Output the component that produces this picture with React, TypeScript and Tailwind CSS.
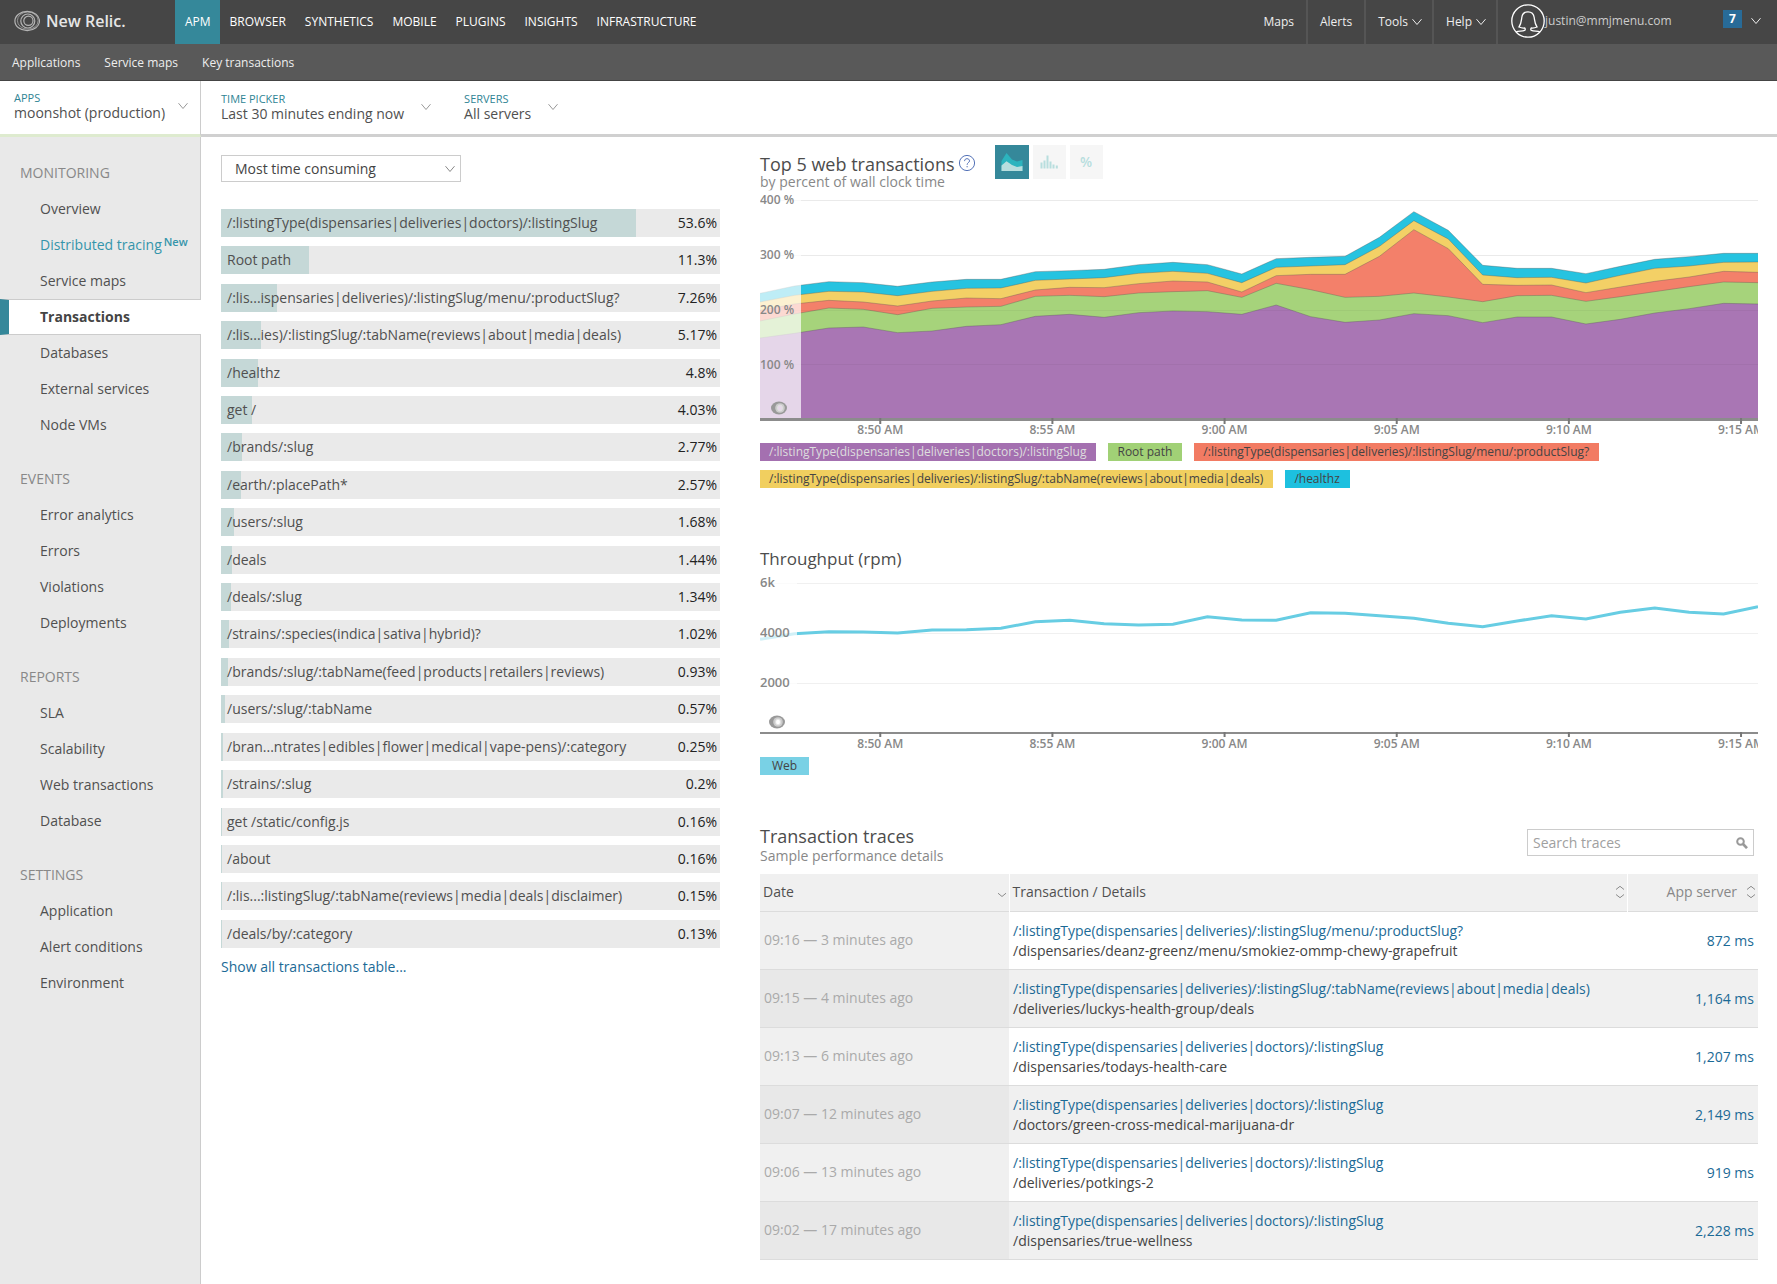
import { Fragment } from "react";
import type { ReactNode } from "react";

const products = ["APM", "BROWSER", "SYNTHETICS", "MOBILE", "PLUGINS", "INSIGHTS", "INFRASTRUCTURE"];

const sections = [
    {
        title: "MONITORING",
        items: ["Overview", "Distributed tracing", "Service maps", "Transactions", "Databases", "External services", "Node VMs"],
    },
    { title: "EVENTS", items: ["Error analytics", "Errors", "Violations", "Deployments"] },
    { title: "REPORTS", items: ["SLA", "Scalability", "Web transactions", "Database"] },
    { title: "SETTINGS", items: ["Application", "Alert conditions", "Environment"] },
];

const transactions: [string, number][] = [
    ["/:listingType(dispensaries|deliveries|doctors)/:listingSlug", 53.6],
    ["Root path", 11.3],
    ["/:lis...ispensaries|deliveries)/:listingSlug/menu/:productSlug?", 7.26],
    ["/:lis...ies)/:listingSlug/:tabName(reviews|about|media|deals)", 5.17],
    ["/healthz", 4.8],
    ["get /", 4.03],
    ["/brands/:slug", 2.77],
    ["/earth/:placePath*", 2.57],
    ["/users/:slug", 1.68],
    ["/deals", 1.44],
    ["/deals/:slug", 1.34],
    ["/strains/:species(indica|sativa|hybrid)?", 1.02],
    ["/brands/:slug/:tabName(feed|products|retailers|reviews)", 0.93],
    ["/users/:slug/:tabName", 0.57],
    ["/bran...ntrates|edibles|flower|medical|vape-pens)/:category", 0.25],
    ["/strains/:slug", 0.2],
    ["get /static/config.js", 0.16],
    ["/about", 0.16],
    ["/:lis...:listingSlug/:tabName(reviews|media|deals|disclaimer)", 0.15],
    ["/deals/by/:category", 0.13],
];

// Upper edge of every stacked band, one value per minute, in plot units (y grows downwards)
const bands = [
    { color: "#26c3e0", top: [490, 468, 455, 458, 469, 456, 448, 448, 425, 422, 418, 404, 397, 404, 432, 386, 382, 379, 322, 245, 301, 406, 415, 415, 431, 409, 388, 380, 370, 370] },
    { color: "#f3d066", top: [516, 496, 484, 486, 497, 484, 475, 474, 451, 447, 443, 430, 424, 430, 458, 412, 408, 404, 349, 272, 327, 435, 443, 442, 459, 436, 415, 408, 397, 396] },
    { color: "#f3806a", top: [541, 522, 511, 516, 528, 513, 504, 506, 480, 472, 473, 461, 453, 456, 486, 437, 433, 433, 379, 299, 356, 463, 466, 465, 488, 471, 454, 441, 424, 427] },
    { color: "#a6d37b", top: [573, 552, 534, 538, 554, 535, 531, 529, 499, 496, 500, 489, 485, 482, 502, 460, 479, 502, 499, 489, 501, 515, 497, 496, 514, 500, 485, 470, 456, 458] },
    { color: "#a976b4", top: [624, 610, 594, 591, 608, 603, 589, 584, 559, 553, 562, 548, 543, 545, 553, 525, 560, 577, 570, 551, 557, 578, 561, 561, 582, 568, 549, 536, 520, 522] },
];

const throughput = [328, 311, 305, 306, 309, 300, 299, 295, 275, 271, 281, 285, 283, 260, 270, 271, 248, 250, 257, 265, 280, 290, 273, 257, 267, 247, 234, 247, 252, 230];

const timeTicks = [
    { label: "8:50 AM", x: "12.05%" },
    { label: "8:55 AM", x: "29.3%" },
    { label: "9:00 AM", x: "46.55%" },
    { label: "9:05 AM", x: "63.8%" },
    { label: "9:10 AM", x: "81.05%" },
    { label: "9:15 AM", x: "98.3%" },
];

const traces = [
    { date: "09:16 — 3 minutes ago", name: "/:listingType(dispensaries|deliveries)/:listingSlug/menu/:productSlug?", path: "/dispensaries/deanz-greenz/menu/smokiez-ommp-chewy-grapefruit", time: "872 ms" },
    { date: "09:15 — 4 minutes ago", name: "/:listingType(dispensaries|deliveries)/:listingSlug/:tabName(reviews|about|media|deals)", path: "/deliveries/luckys-health-group/deals", time: "1,164 ms" },
    { date: "09:13 — 6 minutes ago", name: "/:listingType(dispensaries|deliveries|doctors)/:listingSlug", path: "/dispensaries/todays-health-care", time: "1,207 ms" },
    { date: "09:07 — 12 minutes ago", name: "/:listingType(dispensaries|deliveries|doctors)/:listingSlug", path: "/doctors/green-cross-medical-marijuana-dr", time: "2,149 ms" },
    { date: "09:06 — 13 minutes ago", name: "/:listingType(dispensaries|deliveries|doctors)/:listingSlug", path: "/deliveries/potkings-2", time: "919 ms" },
    { date: "09:02 — 17 minutes ago", name: "/:listingType(dispensaries|deliveries|doctors)/:listingSlug", path: "/dispensaries/true-wellness", time: "2,228 ms" },
];

const STEP = 2994 / 29;
const toPoints = (values: number[]) => values.map((y, i) => `${(i * STEP).toFixed(1)},${y}`).join(" ");

const Chevron = ({ className = "" }: { className?: string }) => (
    <svg viewBox="0 0 12 8" fill="none" stroke="currentColor" className={`w-3 h-2 shrink-0 ${className}`} aria-hidden="true">
        <path d="M1.5 1.2 6 6.5 10.5 1.2" />
    </svg>
);

const SortIcon = () => (
    <svg viewBox="0 0 10 14" fill="none" stroke="#8c8c8c" className="w-[10px] h-[14px] shrink-0" aria-hidden="true">
        <path d="M1 4.5 5 1.3 9 4.5M1 9.5 5 12.7 9 9.5" />
    </svg>
);

const SortDownIcon = () => (
    <svg viewBox="0 0 10 6" fill="none" stroke="#8c8c8c" className="mt-[6px] w-[10px] h-[6px] shrink-0" aria-hidden="true">
        <path d="M1 1.2 5 4.5 9 1.2" />
    </svg>
);

const Logo = () => (
    <svg viewBox="0 0 26 22" fill="none" stroke="#b5b5b5" className="w-[26px] h-[22px]" aria-hidden="true">
        <ellipse cx="13.2" cy="11" rx="12.3" ry="9.6" strokeWidth="1.2" />
        <ellipse cx="13.8" cy="10.6" rx="10.4" ry="8.6" strokeWidth="0.7" />
        <circle cx="13.8" cy="11" r="7" strokeWidth="1.2" />
        <circle cx="14.4" cy="10.8" r="4.6" strokeWidth="1.2" />
    </svg>
);

const Avatar = () => (
    <svg viewBox="0 0 34 34" fill="none" stroke="#fff" strokeWidth="1.3" className="w-[34px] h-[34px]" aria-hidden="true">
        <circle cx="17" cy="17" r="16.2" />
        <path d="M4.8 28C8 26.900 11 27.500 13.600 26.400 14.600 25.600 14.400 24.200 13.400 24 11.500 24.200 9.800 23.800 8 23 10.300 19.800 10.300 16.800 10.800 13.500 11.300 9.800 13.500 7.800 17 7.800S22.700 9.800 23.200 13.500C23.700 16.800 23.700 19.800 26 23 24.200 23.800 22.500 24.200 20.600 24 19.600 24.200 19.400 25.600 20.400 26.400 23 27.500 26 26.900 29.200 28" />
    </svg>
);

const Mark = ({ x, y, fill }: { x: number; y: number; fill: string }) => (
    <g>
        <ellipse cx={x} cy={y} rx="8" ry="6.5" fill="#999" />
        <circle cx={x + 1} cy={y} r="4.8" fill="#ccc" />
        <ellipse cx={x + 1} cy={y} rx="2.5" ry="3" fill={fill} stroke="#e0e0e0" />
    </g>
);

const TimeAxis = ({ y, thickness }: { y: number; thickness: number }) => (
    <>
        <rect x="0" y={y} width="100%" height={thickness} fill="#8c8c8c" />
        {timeTicks.map((tick) => (
            <Fragment key={tick.label}>
                <line x1={tick.x} x2={tick.x} y1={y} y2={y + thickness + 3} stroke="#777" strokeWidth="2" />
                <text x={tick.x} y={y + 16} textAnchor="middle" className="text-xs font-semibold fill-[#888]">
                    {tick.label}
                </text>
            </Fragment>
        ))}
    </>
);

const Picker = ({ label, value, gap }: { label: string; value: string; gap: string }) => (
    <button type="button" className={`flex items-center text-left ${gap}`}>
        <span className="flex flex-col">
            <span className="text-[11px] leading-[14px] text-[#2f8494]">{label}</span>
            <span className="text-sm leading-4 text-[#505050]">{value}</span>
        </span>
        <Chevron className="text-[#999]" />
    </button>
);

const LegendItem = ({ className, children }: { className: string; children: ReactNode }) => (
    <button type="button" className={`h-[18px] pl-[9px] pr-[10px] text-xs leading-[18px] ${className}`}>
        {children}
    </button>
);

const TopBar = () => (
    <header>
        <div className="flex h-11 items-stretch bg-[#464646] text-xs text-white">
            <a href="#" className="flex w-[175px] items-center pl-[14px] pb-[2px]">
                <Logo />
                <span className="pl-[6px] text-base font-semibold text-[#e6e6e6]">New Relic.</span>
            </a>
            <nav className="flex">
                {products.map((name) => (
                    <a key={name} href="#" className={`flex items-center pl-[10px] pr-[9px] ${name === "APM" ? "bg-[#35889a]" : ""}`}>
                        {name}
                    </a>
                ))}
            </nav>
            <div className="ml-auto flex text-[#eee]">
                <a href="#" className="flex items-center border-r-2 border-[#555] px-3">Maps</a>
                <a href="#" className="flex items-center border-r-2 border-[#555] px-3">Alerts</a>
                <button type="button" className="flex items-center gap-[3px] border-r-2 border-[#555] pl-3 pr-[9px]">
                    Tools <Chevron />
                </button>
                <button type="button" className="flex items-center gap-[3px] border-r-2 border-[#555] pl-3 pr-[9px]">
                    Help <Chevron />
                </button>
            </div>
            <button type="button" className="flex w-[279px] items-center pl-[13px] pr-[15px] pb-[2px] text-left text-[#ccc]">
                <Avatar />
                <span className="flex-1">justin@mmjmenu.com</span>
                <span className="mb-1 h-[18px] w-[19px] bg-[#286b98] text-center text-xs leading-[18px] font-bold text-white">7</span>
                <Chevron className="ml-2 text-[#eee]" />
            </button>
        </div>
        <nav className="flex h-[37px] items-center gap-6 border-b border-[#444] bg-[#595959] px-3 pt-[2px] text-xs text-[#eee]">
            <a href="#">Applications</a>
            <a href="#">Service maps</a>
            <a href="#">Key transactions</a>
        </nav>
    </header>
);

const SideBar = () => (
    <aside className="w-[201px] shrink-0 border-r border-[#ccc] bg-[#e9e9e9] pt-[18px] text-sm">
        {sections.map((section) => (
            <div key={section.title} className="pb-[18px]">
                <h2 className="flex h-9 items-center pl-5 text-[#888]">{section.title}</h2>
                <ul>
                    {section.items.map((item) =>
                        item === "Transactions" ? (
                            <li key={item}>
                                <a href="#" className="-mr-px flex h-9 items-center border-y border-y-[#ccc] border-l-[9px] border-l-[#35889a] bg-white pl-[31px] font-bold text-[#444]">
                                    {item}
                                </a>
                            </li>
                        ) : (
                            <li key={item}>
                                <a href="#" className={`flex h-9 items-center pl-10 ${item === "Distributed tracing" ? "text-[#3595ab]" : "text-[#505050]"}`}>
                                    {item}
                                    {item === "Distributed tracing" && <span className="mb-[6px] pl-[2px] text-[11px] font-semibold">New</span>}
                                </a>
                            </li>
                        )
                    )}
                </ul>
            </div>
        ))}
    </aside>
);

const TransactionList = () => (
    <section className="pt-[18px]">
        <div className="relative w-60">
            <select aria-label="Sort transactions" className="block h-[27px] w-full appearance-none border border-[#ccc] bg-white pl-[13px] text-sm text-[#444]">
                <option>Most time consuming</option>
            </select>
            <Chevron className="pointer-events-none absolute top-[10px] right-[5px] text-[#888]" />
        </div>
        <ul className="mt-[27px] flex h-[739px] flex-col justify-between text-sm">
            {transactions.map(([name, share]) => (
                <li key={name}>
                    <a href="#" className="relative flex h-7 items-center justify-between bg-[#eaeaea] pl-[6px] pr-[3px] text-[#505050]">
                        <span className="absolute inset-y-0 left-0 min-w-px bg-[#c5d8d7]" style={{ width: `${share * 1.552}%` }} />
                        <span className="relative">{name}</span>
                        <span className="relative text-[#222]">{share}%</span>
                    </a>
                </li>
            ))}
        </ul>
        <a href="#" className="mt-[9px] inline-block text-sm leading-5 text-[#1b6a96]">Show all transactions table...</a>
    </section>
);

const TopTransactionsChart = () => (
    <section>
        <div className="flex items-start">
            <div className="pt-[17px]">
                <h2 className="flex items-center gap-[3px] text-lg leading-5 text-[#4c4c4c]">
                    Top 5 web transactions
                    <svg viewBox="0 0 18 18" fill="none" stroke="#5573b8" className="mb-[2px] w-[18px] h-[18px]" aria-hidden="true">
                        <circle cx="9" cy="9" r="7.6" />
                        <path d="M6.6 7.1C6.6 5.500 7.600 4.700 9 4.700S11.500 5.500 11.500 6.900C11.500 8.600 9.100 8.700 9.100 10.800M9.100 12v1.300" />
                    </svg>
                </h2>
                <p className="text-sm leading-4 text-[#888]">by percent of wall clock time</p>
            </div>
            <div className="ml-[19px] mt-2 flex gap-1">
                <button type="button" aria-label="Area chart" className="flex h-[34px] w-[34px] items-center justify-center bg-[#35889a]">
                    <svg viewBox="0 0 22 18" className="w-[22px] h-[18px]" aria-hidden="true">
                        <path d="M0.5 8 5.5 0 11 6.5 16 8.5 21.5 7V18H0.5Z" fill="#2cb4be" />
                        <path d="M0.5 12.5 5.5 8.3 11 12 16 14 21.5 13V18H0.5Z" fill="#b8dede" />
                    </svg>
                </button>
                <button type="button" aria-label="Histogram" className="flex h-[34px] w-[33px] items-center justify-center bg-[#f6f6f6]">
                    <svg viewBox="0 0 18 14" stroke="#b8dede" strokeWidth="2" className="w-[18px] h-[14px]" aria-hidden="true">
                        <path d="M1.5 13.5v-6M4.5 13.5v-8M7.5 13.5V0.5M10.5 13.5v-7M13.5 13.5v-4M16.8 13.5v-3" />
                    </svg>
                </button>
                <button type="button" className="h-[34px] w-[33px] bg-[#f6f6f6] text-sm font-semibold text-[#b8dede]">%</button>
            </div>
        </div>
        <svg className="block h-[250px] w-full overflow-hidden">
            {[10, 65].map((y) => (
                <rect key={y} x="0" y={y} width="100%" height="1" fill="#eaeaea" />
            ))}
            <svg viewBox="0 180 2994 750" preserveAspectRatio="none" width="100%" height="250">
                {bands.map((band) => (
                    <g key={band.color}>
                        <polygon points={`0,870 ${toPoints(band.top)} 2994,870`} fill={band.color} />
                        <polyline points={toPoints(band.top)} fill="none" stroke="#555" strokeOpacity="0.35" vectorEffect="non-scaling-stroke" />
                    </g>
                ))}
            </svg>
            {[120, 174].map((y) => (
                <rect key={y} x="0" y={y} width="100%" height="1" fill="#000" fillOpacity="0.04" />
            ))}
            <rect x="0" y="0" width="41" height="229" fill="#fff" fillOpacity="0.7" />
            {["400 %", "300 %", "200 %", "100 %"].map((label, i) => (
                <text key={label} x="0" y={14 + i * 55} className="text-xs font-semibold fill-[#888]">{label}</text>
            ))}
            <Mark x={19} y={218} fill="#e6d8e9" />
            <TimeAxis y={228} thickness={3} />
        </svg>
        <div className="mt-[3px] flex flex-wrap gap-x-3 gap-y-[9px] text-[#444]">
            <LegendItem className="bg-[#a470b0] text-[#ddd]">/:listingType(dispensaries|deliveries|doctors)/:listingSlug</LegendItem>
            <LegendItem className="bg-[#a1d176]">Root path</LegendItem>
            <LegendItem className="bg-[#f27b63]">/:listingType(dispensaries|deliveries)/:listingSlug/menu/:productSlug?</LegendItem>
            <LegendItem className="bg-[#f1cf5f]">/:listingType(dispensaries|deliveries)/:listingSlug/:tabName(reviews|about|media|deals)</LegendItem>
            <LegendItem className="bg-[#1dc0df]">/healthz</LegendItem>
        </div>
    </section>
);

const ThroughputChart = () => (
    <section className="mt-[61px]">
        <h2 className="text-[17px] leading-5 text-[#4c4c4c]">Throughput (rpm)</h2>
        <svg className="mt-px block h-[182px] w-full overflow-hidden">
            {[13, 63, 113].map((y) => (
                <rect key={y} x="0" y={y} width="100%" height="1" fill="#f0f0f0" />
            ))}
            <svg viewBox="0 120 2994 546" preserveAspectRatio="none" width="100%" height="182">
                <polyline points={toPoints(throughput)} fill="none" stroke="#67cde3" strokeWidth="3" vectorEffect="non-scaling-stroke" />
            </svg>
            <rect x="0" y="0" width="37" height="161" fill="#fff" fillOpacity="0.7" />
            {["6k", "4000", "2000"].map((label, i) => (
                <text key={label} x="0" y={17 + i * 50} className="text-[13px] font-semibold fill-[#888]">{label}</text>
            ))}
            <Mark x={17} y={152} fill="#fff" />
            <TimeAxis y={162} thickness={2} />
        </svg>
        <div className="mt-[5px] flex text-[#444]">
            <button type="button" className="h-[18px] bg-[#79d1e5] px-3 text-xs leading-[18px]">Web</button>
        </div>
    </section>
);

const TransactionTraces = () => (
    <section className="mt-[51px]">
        <div className="flex items-start justify-between">
            <div>
                <h2 className="text-lg leading-5 text-[#4c4c4c]">Transaction traces</h2>
                <p className="text-sm leading-5 text-[#888]">Sample performance details</p>
            </div>
            <div className="relative mt-[3px] mr-1">
                <input type="text" aria-label="Search traces" placeholder="Search traces" className="block h-[27px] w-[227px] border border-[#ccc] pl-[5px] text-sm placeholder:text-[#a0a0a0]" />
                <svg viewBox="0 0 12 12" fill="none" stroke="#999" className="absolute top-2 right-[6px] w-3 h-3" aria-hidden="true">
                    <circle cx="4.5" cy="4.5" r="3.3" strokeWidth="2" />
                    <path d="M7 7l4 4.2" strokeWidth="2.6" />
                </svg>
            </div>
        </div>
        <table className="mt-2 w-full table-fixed border-collapse text-sm">
            <colgroup>
                <col className="w-[249px]" />
                <col />
                <col className="w-[131px]" />
            </colgroup>
            <thead>
                <tr className="h-[37px] border-b border-[#dcdcdc] bg-[#f0f0f0] text-[#505050]">
                    <th scope="col" className="border-r border-r-white pl-[3px] pr-[2px] font-normal">
                        <button type="button" className="flex w-full items-center justify-between">
                            Date <SortDownIcon />
                        </button>
                    </th>
                    <th scope="col" className="border-r border-r-white pl-[3px] pr-[2px] font-normal">
                        <button type="button" className="flex w-full items-center justify-between">
                            Transaction / Details <SortIcon />
                        </button>
                    </th>
                    <th scope="col" className="pr-[2px] font-normal text-[#888]">
                        <button type="button" className="flex w-full items-center justify-end gap-[9px]">
                            App server <SortIcon />
                        </button>
                    </th>
                </tr>
            </thead>
            <tbody>
                {traces.map((trace) => (
                    <tr key={trace.date} className="group h-[58px] border-b border-[#dcdcdc] even:bg-[#f0f0f0]">
                        <td className="bg-[#f0f0f0] pl-1 text-[#aaa] group-even:bg-[#e8e8e8]">{trace.date}</td>
                        <td className="pl-1 pt-px leading-5">
                            <a href="#" className="block text-[#1b6a96]">{trace.name}</a>
                            <span className="block text-[#444]">{trace.path}</span>
                        </td>
                        <td className="pr-1 pt-px text-right">
                            <a href="#" className="text-[#1b6a96]">{trace.time}</a>
                        </td>
                    </tr>
                ))}
            </tbody>
        </table>
    </section>
);

export default function App() {
    return (
        <div className="flex min-h-screen flex-col bg-white font-['Open_Sans',sans-serif]">
            <TopBar />
            {/* Pickers */}
            <div className="flex h-14">
                <div className="flex w-[201px] shrink-0 items-start border-r border-b-[3px] border-r-[#ccc] border-b-[#deebcf] pt-[10px] pl-[14px]">
                    <Picker label="APPS" value="moonshot (production)" gap="gap-3" />
                </div>
                <div className="flex flex-1 items-start gap-8 border-b-[3px] border-[#d0d0d0] pt-[11px] pl-5">
                    <Picker label="TIME PICKER" value="Last 30 minutes ending now" gap="gap-4" />
                    <Picker label="SERVERS" value="All servers" gap="gap-4" />
                </div>
            </div>
            <div className="flex flex-1">
                <SideBar />
                <main className="grid flex-1 grid-cols-[minmax(0,1fr)_minmax(0,2fr)] items-start gap-10 pr-[19px] pl-5">
                    <TransactionList />
                    <div>
                        <TopTransactionsChart />
                        <ThroughputChart />
                        <TransactionTraces />
                    </div>
                </main>
            </div>
        </div>
    );
}
